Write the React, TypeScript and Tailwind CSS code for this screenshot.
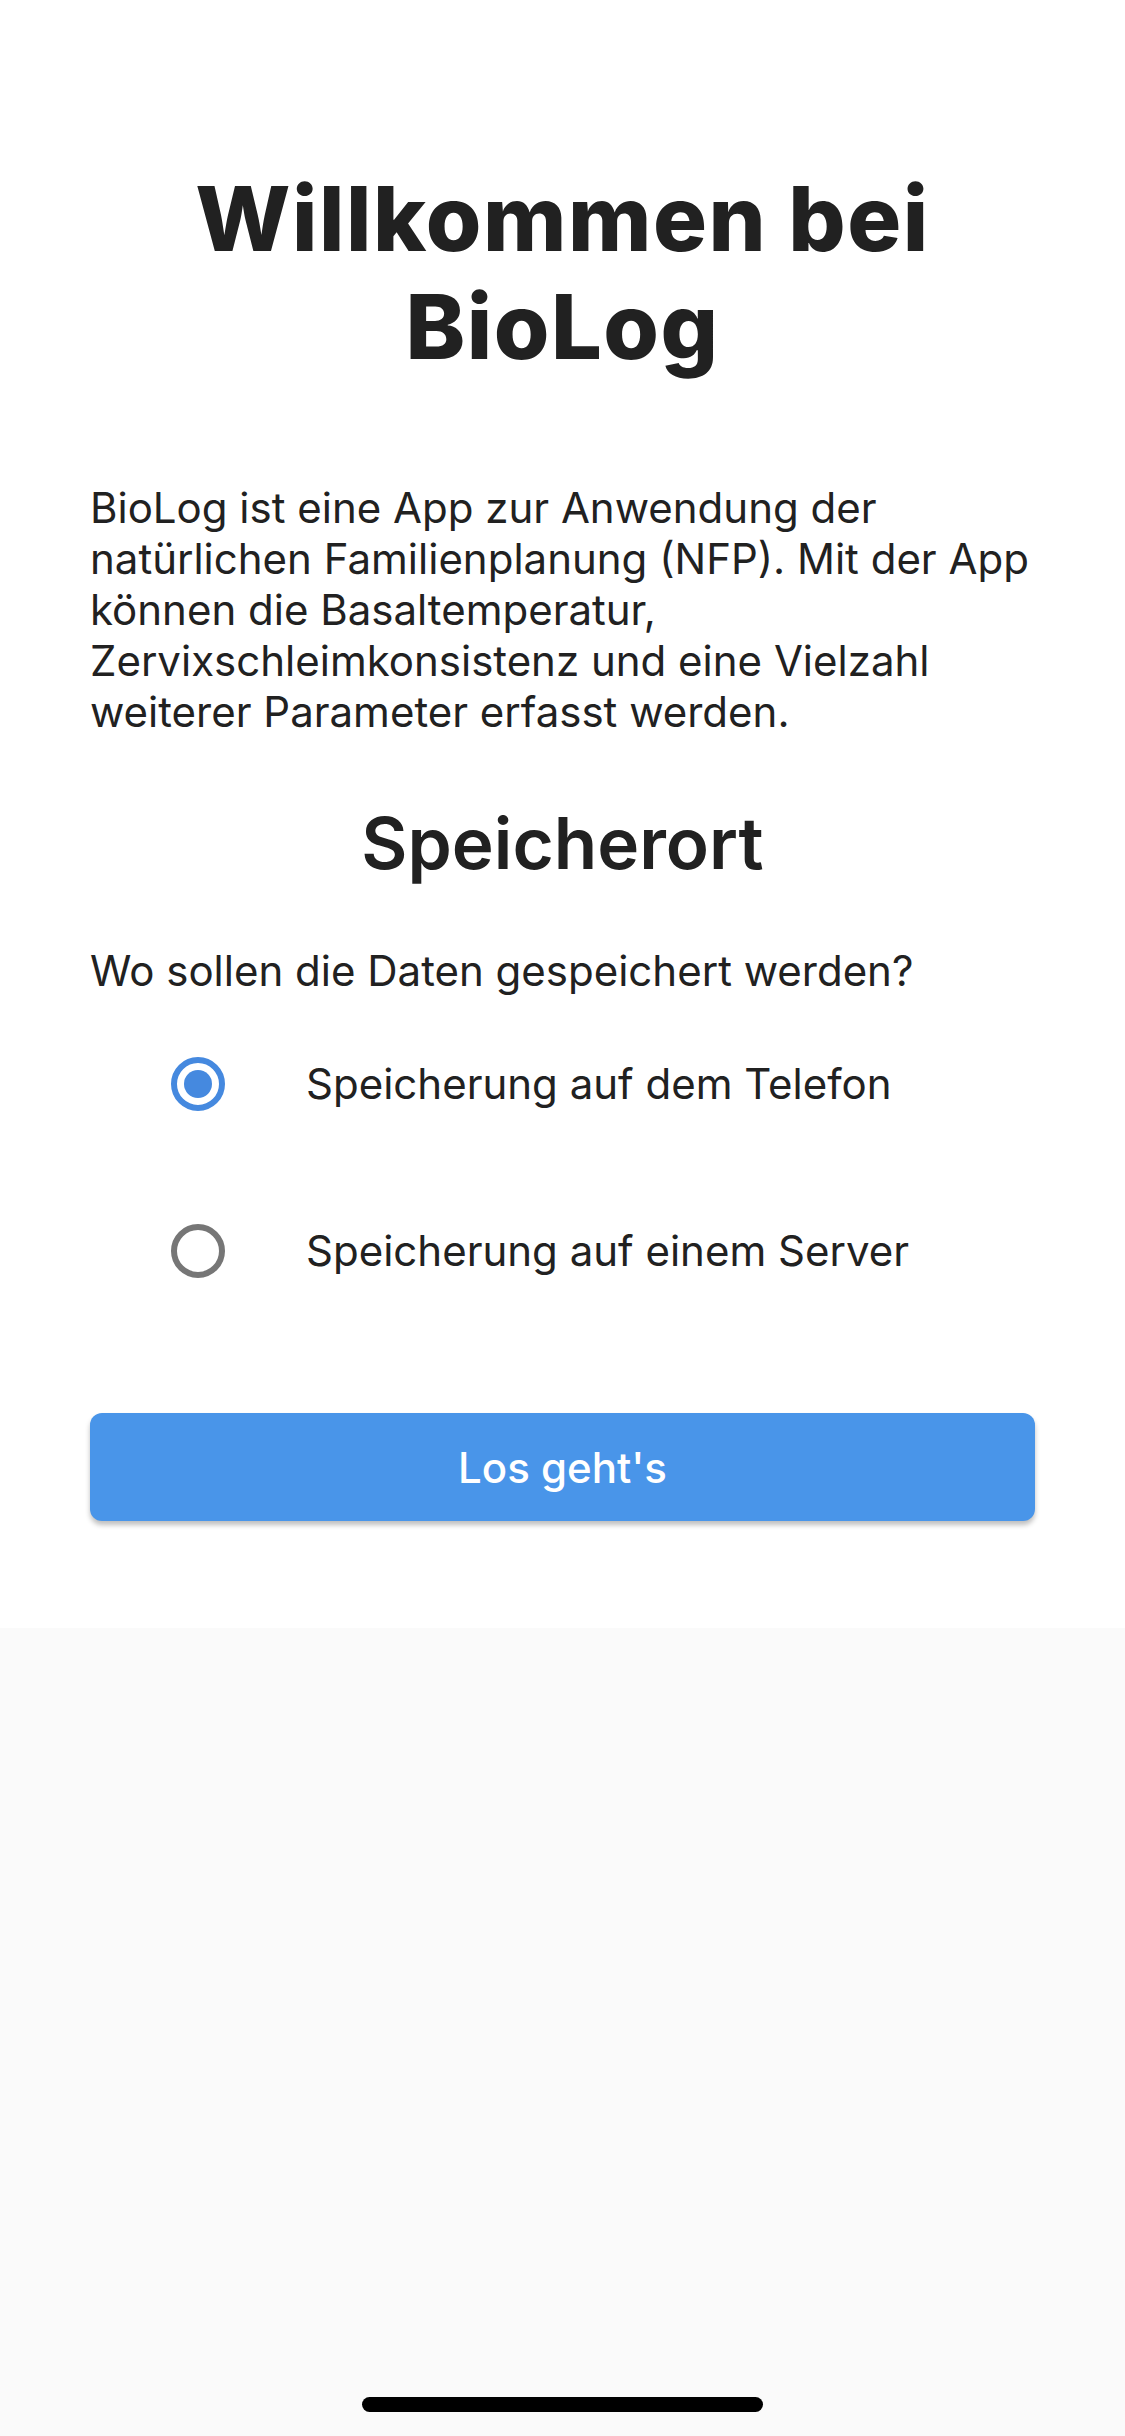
import React from "react";

function Radio({ selected }: { selected: boolean }) {
  return (
    <div
      className={
        selected
          ? "flex h-[54px] w-[54px] items-center justify-center rounded-full border-[6px] border-[#4589df]"
          : "flex h-[54px] w-[54px] items-center justify-center rounded-full border-[6px] border-[#767676]"
      }
    >
      {selected ? <div className="h-[28px] w-[28px] rounded-full bg-[#4589df]" /> : null}
    </div>
  );
}

export default function App() {
  return (
    <div
      className="flex min-h-[2436px] w-full flex-col bg-[#fafafa] text-[#212121]"
      style={{ fontFamily: "Inter, 'Noto Sans', sans-serif" }}
    >
      <div className="flex flex-col bg-white px-[90px] pt-[165px] pb-[107px]">
        <h1 className="text-center text-[90px] leading-[108px] font-extrabold tracking-[1.5px]">
          Willkommen bei
          <br />
          BioLog
        </h1>
        <p className="mt-[101px] text-[42px] leading-[51px]">
          BioLog ist eine App zur Anwendung der natürlichen Familienplanung (NFP). Mit der App können die
          Basaltemperatur, Zervixschleimkonsistenz und eine Vielzahl weiterer Parameter erfasst werden.
        </p>
        <h2 className="mt-[64px] text-center text-[71px] leading-[84px] font-semibold">Speicherort</h2>
        <p className="mt-[60px] text-[42px] leading-[51px]">Wo sollen die Daten gespeichert werden?</p>
        <div className="mt-[4px] flex flex-col">
          <div className="flex h-[167px] items-center pl-[81px]">
            <Radio selected={true} />
            <span className="ml-[81px] text-[42px] leading-[51px]">Speicherung auf dem Telefon</span>
          </div>
          <div className="flex h-[167px] items-center pl-[81px]">
            <Radio selected={false} />
            <span className="ml-[81px] text-[42px] leading-[51px]">Speicherung auf einem Server</span>
          </div>
        </div>
        <button className="mt-[79px] flex h-[108px] w-full items-center justify-center rounded-[12px] bg-[#4995e9] text-[42px] font-medium text-white shadow-[0_4px_5px_rgba(0,0,0,0.25)]">
          Los geht&apos;s
        </button>
      </div>
      <div className="flex flex-1 flex-col items-center justify-end pb-[24px]">
        <div className="h-[15px] w-[401px] rounded-full bg-black" />
      </div>
    </div>
  );
}
